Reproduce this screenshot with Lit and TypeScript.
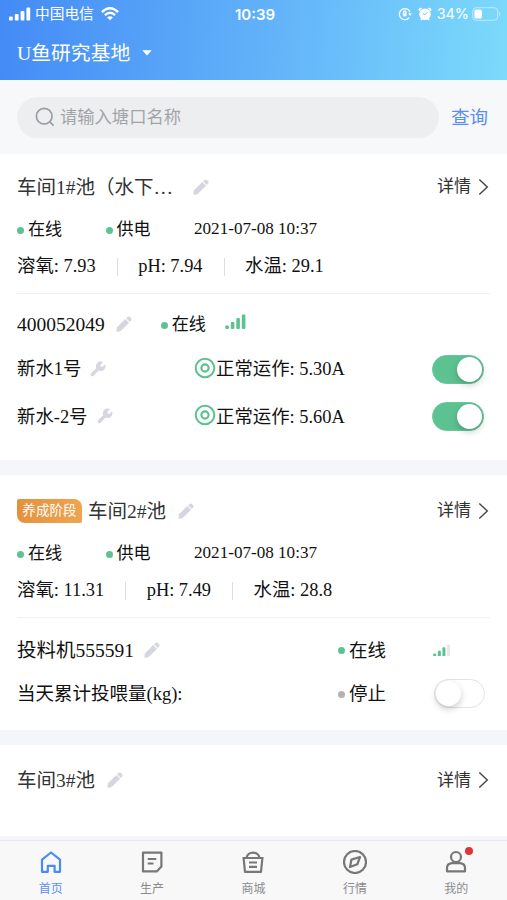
import { LitElement, html, svg, css, nothing } from "lit";
import { customElement, property } from "lit/decorators.js";

const pencil = html`<svg class="pencil" width="16" height="16" viewBox="0 0 16 16" fill="#d5d6e0">
  <path d="M.4 15.6 1 11.2 9.2 2.9 13.1 6.8 4.9 14.8Q2.6 15.9 .4 15.6Z" />
  <path d="M10 2.2 11.5 .9Q12.8 0 13.9 .9L15.2 2.2Q16.1 3.3 15.1 4.5L13.8 6Z" />
</svg>`;

const wrench = html`<svg class="wrench" width="16" height="16" viewBox="0 0 16 16" fill="#d5d6e0">
  <path d="M13.2 1.1 10.3 4 10.7 5.7 12.3 6 15.1 3.2C16 5.8 14.9 8.4 12.8 9.4 11.3 10.1 9.8 10 8.6 9.6L3.6 14.8C2.9 15.5 1.8 15.5 1.1 14.8 .4 14.1 .4 13 1.1 12.3L6.2 7.2C5.6 5.7 5.8 3.6 7.2 2.1 8.9 .4 11.2 .2 13.2 1.1Z" />
</svg>`;

const target = html`<svg class="target" width="22" height="22" viewBox="0 0 22 22" fill="none" stroke="#5dc292">
  <circle cx="11" cy="11" r="9.3" stroke-width="2" />
  <circle cx="11" cy="11" r="3.6" stroke-width="2.2" />
</svg>`;

const chevron = html`<svg class="chevron" width="11" height="18" viewBox="0 0 11 18" fill="none" stroke="#444" stroke-width="1.4">
  <path d="M1.3 1.5 9.3 9 1.3 16.5" />
</svg>`;

@customElement("signal-bars")
class SignalBars extends LitElement {
  @property({ type: Number }) level = 4;
  @property({ type: Boolean }) small = false;
  static styles = css`
    :host { display: block; }
    svg { display: block; }
  `;
  render() {
    const heights = [3.5, 7, 11, 14.5];
    const size = this.small ? 17.5 : 21;
    return html`<svg width=${size} height=${this.small ? 12.5 : 15} viewBox="0 0 21 15">
      ${heights.map((h, i) => svg`<rect x=${i * 5.5 + 0.3} y=${15 - h} width="3.6" height=${h} rx="1"
        fill=${i < this.level ? "#5dc292" : "#e6e8ea"} />`)}
    </svg>`;
  }
}

@customElement("toggle-switch")
class ToggleSwitch extends LitElement {
  @property({ type: Boolean, reflect: true }) on = false;
  static styles = css`
    :host {
      display: flex; box-sizing: border-box; width: 51px; height: 29px; padding: 1px;
      border: 1px solid #e2e2e2; border-radius: 15px; background: #fff;
    }
    :host([on]) { width: 52px; justify-content: flex-end; background: #5dc292; border-color: #6ac79b; }
    .knob { width: 25px; height: 25px; border-radius: 50%; background: #fff; box-shadow: 0 3px 7px rgba(0, 0, 0, 0.2); }
  `;
  render() { return html`<div class="knob"></div>`; }
}

interface Pump { name: string; amps: string; }
interface Pond {
  name: string; stage?: string; time?: string; metrics?: string[];
  controller?: { id: string; pumps: Pump[] };
  feeder?: string;
}

const ponds: Pond[] = [
  {
    name: "车间1#池（水下…", time: "2021-07-08 10:37",
    metrics: ["溶氧: 7.93", "pH: 7.94", "水温: 29.1"],
    controller: { id: "400052049", pumps: [{ name: "新水1号", amps: "5.30A" }, { name: "新水-2号", amps: "5.60A" }] },
  },
  {
    name: "车间2#池", stage: "养成阶段", time: "2021-07-08 10:37",
    metrics: ["溶氧: 11.31", "pH: 7.49", "水温: 28.8"],
    feeder: "投料机555591",
  },
  { name: "车间3#池" },
];

@customElement("pond-card")
class PondCard extends LitElement {
  @property({ attribute: false }) pond!: Pond;
  static styles = css`
    :host { display: block; box-sizing: border-box; background: #fff; padding: 0 16px 0 17px; white-space: nowrap; }
    svg { display: block; flex: none; }
    .row { display: flex; align-items: center; }
    .row > span { padding-top: 2px; }
    .row > .stage, .row > .time, .row > .bars { padding-top: 0; }
    .title { height: 65px; font-size: 19.5px; color: #333; }
    .title.staged { height: 65px; padding-top: 3px; }
    .title.bare { height: 70px; }
    .title .pencil { margin-left: 12px; }
    .name.clipped { padding-right: 8px; }
    .stage {
      box-sizing: border-box; width: 65px; height: 24px; margin-right: 6px; line-height: 23px; text-align: center;
      font-size: 13.5px; letter-spacing: 0.1px; color: #fff;
      background: linear-gradient(90deg, #e5913c, #eda552); border-radius: 2px 8px 2px 8px;
    }
    .more { display: flex; align-items: center; gap: 7px; margin-left: auto; font-size: 17px; }
    .more .chevron { margin: -2px 2px 0 0; }
    .status { height: 20px; font-size: 17.1px; color: #111; }
    .dot { flex: none; width: 7px; height: 7px; margin-right: 4px; border-radius: 50%; background: #5dc292; }
    .dot.off { background: #b3b3b3; }
    .cell { display: flex; align-items: center; }
    .status .cell { width: 88.5px; }
    .metrics { height: 54px; font-size: 18.4px; color: #111; }
    .metric + .metric { display: flex; align-items: center; }
    .metric + .metric::before { content: ""; width: 1px; height: 18px; margin: 0 20.5px 0 21px; background: #ddd; }
    .divider { height: 1px; background: #f1f1f3; }
    .controller { height: 60px; font-size: 19.5px; color: #111; }
    .controller .pencil { margin-left: 11px; }
    .controller .cell { margin-left: 29px; font-size: 17.1px; }
    .controller signal-bars { margin: -5px 0 0 19px; }
    .pump { height: 30px; font-size: 18.4px; color: #111; }
    .pump + .pump { height: 65px; }
    .target { margin-top: -3px; }
    .label { display: flex; align-items: center; width: 177px; }
    .wrench { margin: -2px 0 0 9px; }
    toggle-switch { margin: 0 7px 0 auto; }
    .feeder { height: 64px; font-size: 19.5px; color: #111; }
    .feeder .pencil { margin-left: 10px; }
    .total { height: 22px; font-size: 18.5px; color: #111; }
    .state { display: flex; align-items: center; width: 96px; margin-left: auto; font-size: 18.5px; }
    .total toggle-switch { margin: 0 6px 0 0; }
    .bars { width: 57px; }
    .bars signal-bars { margin-left: -1px; }
  `;
  render() {
    const p = this.pond;
    return html`
      <div class="row title ${p.stage ? "staged" : p.time ? "" : "bare"}">
        ${p.stage ? html`<span class="stage">${p.stage}</span>` : nothing}
        <span class="name ${p.name.endsWith("…") ? "clipped" : ""}">${p.name}</span>${pencil}
        <span class="more">详情${chevron}</span>
      </div>
      ${p.time ? html`
        <div class="row status">
          <span class="cell"><i class="dot"></i>在线</span>
          <span class="cell"><i class="dot"></i>供电</span>
          <span class="time">${p.time}</span>
        </div>
        <div class="row metrics">${p.metrics!.map((m) => html`<span class="metric">${m}</span>`)}</div>
        <div class="divider"></div>` : nothing}
      ${p.controller ? html`
        <div class="row controller">
          <span>${p.controller.id}</span>${pencil}
          <span class="cell"><i class="dot"></i>在线</span>
          <signal-bars></signal-bars>
        </div>
        ${p.controller.pumps.map((u) => html`
          <div class="row pump">
            <span class="label">${u.name}${wrench}</span>
            ${target}<span>正常运作: ${u.amps}</span>
            <toggle-switch on></toggle-switch>
          </div>`)}` : nothing}
      ${p.feeder ? html`
        <div class="row feeder">
          <span>${p.feeder}</span>${pencil}
          <span class="state"><i class="dot"></i>在线</span>
          <span class="bars"><signal-bars small level="3"></signal-bars></span>
        </div>
        <div class="row total">
          <span>当天累计投喂量(kg):</span>
          <span class="state"><i class="dot off"></i>停止</span>
          <toggle-switch></toggle-switch>
        </div>` : nothing}
    `;
  }
}

const tabs = [
  { label: "首页", icon: svg`<path d="M3 9.6 12 2.5 21 9.6V21.8H15.6V15.8H8.8V21.8H3Z" />` },
  { label: "生产", icon: svg`<path d="M3 2.6H21.4V16.5L16.8 21.4H3Z" /><path d="M7.7 9H16.3M7.7 13.5H13.5" />` },
  { label: "商城", icon: svg`<path d="M1.5 8H22.5M2.6 8 4 21.8H20L21.4 8M5.5 8C6.5 .8 17.5 .8 18.5 8M8 12.5H16M8 16.8H16" />` },
  { label: "行情", icon: svg`<circle cx="12" cy="12" r="11" /><path d="M17 7 14.3 14.3 7 17 8.4 9.6Z" />` },
  { label: "我的", icon: svg`<circle cx="12" cy="7" r="5" /><path d="M7.7 13.2H16.3Q21 13.8 21 18V21.3H3V18Q3 13.8 7.7 13.2Z" />`, badge: true },
];

@customElement("app-root")
class AppRoot extends LitElement {
  static styles = css`
    :host {
      display: flex; flex-direction: column; width: 507px; height: 900px; overflow: hidden; background: #f5f6fa;
      font-family: "Liberation Serif", "Noto Sans CJK SC", serif; line-height: 1.3; white-space: nowrap;
    }
    svg { display: block; flex: none; }
    .header { flex: none; height: 80px; color: #fff; background: linear-gradient(95deg, #448bf6 0%, #60b0f9 50%, #7cdafb 100%); }
    .system {
      display: grid; grid-template-columns: 1fr auto 1fr; align-items: center; height: 28px; padding: 0 6px 0 9px;
      font-family: Inter, "Noto Sans CJK SC", sans-serif; font-size: 14.7px;
    }
    .side { display: flex; align-items: center; }
    .carrier { margin: 0 7px 0 4px; padding-top: 2px; }
    .clock { padding-top: 1px; font-size: 15px; font-weight: 600; }
    .right { justify-content: flex-end; }
    .percent { font-size: 14.4px; }
    .alarm { margin: 0 5px 0 6px; }
    .battery { margin-left: 3px; }
    .base { display: flex; align-items: center; gap: 12px; height: 49px; padding-left: 17px; font-size: 19.8px; }
    .base span, .field span, .query { padding-top: 2px; }
    .search { display: flex; flex: none; align-items: center; height: 74px; padding-left: 17px; background: #f7f8fa; }
    .field {
      display: flex; align-items: center; gap: 5px; box-sizing: border-box; width: 422px; height: 41px; padding-left: 18px;
      border-radius: 21px; background: #edeef0; color: #a3a4a8; font-size: 17.3px;
    }
    .query { margin-left: 12px; color: #5a8eee; font-size: 18.5px; }
    pond-card { flex: none; }
    .p0 { height: 306px; margin-bottom: 15px; }
    .p1 { height: 255px; margin-bottom: 15px; }
    .p2 { height: 91px; }
    .tabs {
      display: grid; grid-template-columns: repeat(5, 1fr); box-sizing: border-box; height: 60px; margin-top: auto;
      border-top: 1px solid #e6e7ea; background: #f8f8f9; color: #8b8b8b;
      font-family: "Noto Sans CJK SC", sans-serif; font-size: 12px;
    }
    .tab { display: flex; flex-direction: column; align-items: center; gap: 5px; padding-top: 9px; line-height: 18px; }
    .tab.active { color: #5a8ff0; }
    .glyph { position: relative; color: #777; }
    .active .glyph { color: #4a8bf2; }
    .badge { position: absolute; right: -5px; top: -3px; width: 8px; height: 8px; border-radius: 50%; background: #e03535; }
  `;
  render() {
    return html`
      <div class="header">
        <div class="system">
          <div class="side">
            <svg width="22" height="14" viewBox="0 0 22 14" fill="#fff">
              <rect x="0" y="9.5" width="3.8" height="4" rx="1" /><rect x="5.8" y="7" width="3.8" height="6.5" rx="1" />
              <rect x="11.6" y="4" width="3.8" height="9.5" rx="1" /><rect x="17.4" y=".5" width="3.8" height="13" rx="1" />
            </svg>
            <span class="carrier">中国电信</span>
            <svg width="18" height="14" viewBox="0 0 18 14" fill="none" stroke="#fff" stroke-width="2.4">
              <path d="M.9 5.1Q9-2.6 17.1 5.1M3.9 8.2Q9 3.4 14.1 8.2" /><path d="M9 13.2 6.1 10.4Q9 8 11.9 10.4Z" fill="#fff" stroke="none" />
            </svg>
          </div>
          <span class="clock">10:39</span>
          <div class="side right">
            <svg width="14" height="14" viewBox="0 0 14 14" fill="none" stroke="#fff" stroke-width="1.3">
              <path d="M11.2 10.6A5.5 5.5 0 1 1 12 5.2M5.5 6.5V5.2a1.2 1.2 0 0 1 2.4 0V6.5" />
              <rect x="4.8" y="6.3" width="3.8" height="3" fill="#fff" stroke="none" /><path d="M10 6.2H14L12 9Z" fill="#fff" stroke="none" />
            </svg>
            <svg class="alarm" width="14" height="14" viewBox="0 0 14 14" fill="#fff">
              <circle cx="7" cy="7.3" r="5.8" /><path d="M.8 4.4 4.4 1.1Q1.5 0 .7 2.2ZM13.2 4.4 9.6 1.1Q12.5 0 13.3 2.2ZM2 12 3.3 13.6 4.8 12ZM12 12 10.7 13.6 9.2 12Z" />
              <path d="M4.8 6.3 7 7.8 9.2 5.4" fill="none" stroke="#6dc4fa" stroke-width="1" />
            </svg>
            <span class="percent">34%</span>
            <svg class="battery" width="29" height="14" viewBox="0 0 29 14">
              <rect x=".7" y=".7" width="25" height="12.6" rx="3.5" fill="none" stroke="#fff" stroke-opacity=".5" />
              <rect x="2.4" y="2.4" width="7.5" height="9.2" rx="1.6" fill="#fff" /><path d="M27.2 4.5Q29.6 7 27.2 9.5Z" fill="#fff" fill-opacity=".5" />
            </svg>
          </div>
        </div>
        <div class="base"><span>U鱼研究基地</span>
          <svg width="10" height="6" viewBox="0 0 10 6" fill="#fff"><path d="M.3 .2H9.7L5 5.6Z" /></svg>
        </div>
      </div>
      <div class="search">
        <div class="field">
          <svg width="20" height="20" viewBox="0 0 20 20" fill="none" stroke="#999a9e" stroke-width="1.6">
            <circle cx="9.2" cy="9.2" r="7.8" /><path d="M14.7 14.7 18.6 18.6" />
          </svg>
          <span>请输入塘口名称</span>
        </div>
        <span class="query">查询</span>
      </div>
      ${ponds.map((p, i) => html`<pond-card class="p${i}" .pond=${p}></pond-card>`)}
      <div class="tabs">
        ${tabs.map((t, i) => html`
          <div class="tab ${i === 0 ? "active" : ""}">
            <div class="glyph">
              <svg width="24" height="24" viewBox="0 0 24 24" fill="none" stroke="currentColor" stroke-width="2.2" stroke-linejoin="round">${t.icon}</svg>
              ${t.badge ? html`<span class="badge"></span>` : nothing}
            </div>
            <span>${t.label}</span>
          </div>`)}
      </div>
    `;
  }
}
